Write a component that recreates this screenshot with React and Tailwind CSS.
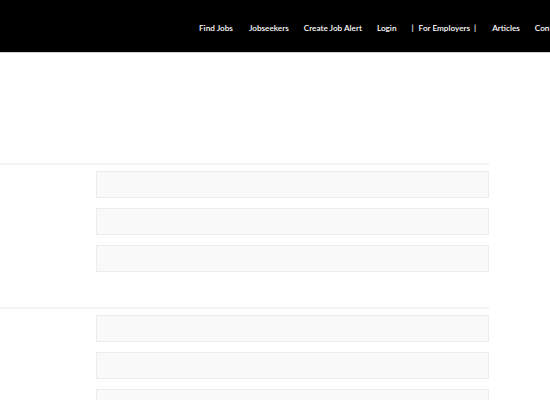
import React from "react";

const navItems = [
  { label: "Find Jobs", ml: "ml-0" },
  { label: "Jobseekers", ml: "ml-[16px]" },
  { label: "Create Job Alert", ml: "ml-[15px]" },
  { label: "Login", ml: "ml-[15px]" },
  { label: "employers", ml: "ml-[15px]" },
  { label: "Articles", ml: "ml-[16px]" },
  { label: "Contact", ml: "ml-[15px]" },
];

const FieldGroup = () => (
  <div className="border-t-2 border-[#f4f4f4] pt-[6px]">
    <div className="flex">
      <div className="w-[96px] shrink-0" />
      <div className="flex-1 flex flex-col gap-[10px]">
        <div className="h-[27px] bg-[#f9f9f9] border border-[#ececec]" />
        <div className="h-[27px] bg-[#f9f9f9] border border-[#ececec]" />
        <div className="h-[27px] bg-[#f9f9f9] border border-[#ececec]" />
      </div>
    </div>
  </div>
);

const App = () => {
  return (
    <div className="w-[550px] h-[400px] overflow-hidden bg-white" style={{ fontFamily: "Lato, 'Open Sans', sans-serif" }}>
      {/* Header */}
      <div className="h-[53px] bg-black border-b border-[#cfcfcf] flex items-center overflow-hidden">
        <nav className="flex items-center pl-[199px] pt-[5px] whitespace-nowrap text-[8.2px] font-semibold text-white">
          {navItems.map((item) =>
            item.label === "employers" ? (
              <a key={item.label} className={`${item.ml} flex`}>
                <span>|</span>
                <span className="ml-[5px]">For Employers</span>
                <span className="ml-[4px]">|</span>
              </a>
            ) : (
              <a key={item.label} className={item.ml}>
                {item.label}
              </a>
            )
          )}
        </nav>
      </div>

      {/* Form */}
      <div className="w-[489px] pt-[110px] flex flex-col gap-[35px]">
        <FieldGroup />
        <FieldGroup />
      </div>
    </div>
  );
};

export default App;
